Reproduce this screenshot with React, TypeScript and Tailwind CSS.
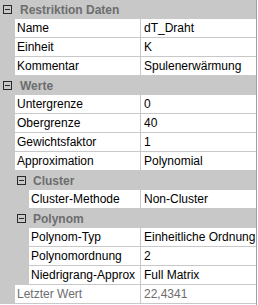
import React from "react";

type Prop = { label: string; value: string; depth: number; readOnly?: boolean };
type Item = { kind: "cat"; label: string; depth: number } | ({ kind: "prop" } & Prop);

const ITEMS: Item[] = [
  { kind: "cat", label: "Restriktion Daten", depth: 0 },
  { kind: "prop", label: "Name", value: "dT_Draht", depth: 1 },
  { kind: "prop", label: "Einheit", value: "K", depth: 1 },
  { kind: "prop", label: "Kommentar", value: "Spulenerwärmung", depth: 1 },
  { kind: "cat", label: "Werte", depth: 0 },
  { kind: "prop", label: "Untergrenze", value: "0", depth: 1 },
  { kind: "prop", label: "Obergrenze", value: "40", depth: 1 },
  { kind: "prop", label: "Gewichtsfaktor", value: "1", depth: 1 },
  { kind: "prop", label: "Approximation", value: "Polynomial", depth: 1 },
  { kind: "cat", label: "Cluster", depth: 1 },
  { kind: "prop", label: "Cluster-Methode", value: "Non-Cluster", depth: 2 },
  { kind: "cat", label: "Polynom", depth: 1 },
  { kind: "prop", label: "Polynom-Typ", value: "Einheitliche Ordnung", depth: 2 },
  { kind: "prop", label: "Polynomordnung", value: "2", depth: 2 },
  { kind: "prop", label: "Niedrigrang-Approx", value: "Full Matrix", depth: 2 },
  { kind: "prop", label: "Letzter Wert", value: "22,4341", depth: 1, readOnly: true },
];

function MinusBox() {
  return (
    <span className="relative w-[9px] h-[9px] border border-[#2a2a2a] shrink-0">
      <span className="absolute left-[1px] top-[3px] w-[5px] h-[1px] bg-[#2a2a2a]" />
    </span>
  );
}

function CategoryRow({ label, depth }: { label: string; depth: number }) {
  return (
    <div className="flex items-center h-[19px] bg-[#c8c8c8]">
      <div className={depth === 0 ? "flex items-center pl-[3px] gap-[8px]" : "flex items-center pl-[17px] gap-[7px]"}>
        <MinusBox />
        <span className="font-bold text-[#6d6d6d] leading-[18px] whitespace-nowrap">{label}</span>
      </div>
    </div>
  );
}

function PropRow({ label, value, depth, readOnly }: Prop) {
  const text = readOnly ? "text-[#6d6d6d]" : "text-black";
  return (
    <div className="flex h-[19px] border-b border-[#c8c8c8]">
      <div className={depth === 2 ? "w-[29px] shrink-0 bg-[#c8c8c8]" : "w-[15px] shrink-0 bg-[#c8c8c8]"} />
      <div className={`flex-1 min-w-0 pl-[2px] leading-[18px] bg-white whitespace-nowrap overflow-hidden ${text}`}>
        {label}
      </div>
      <div className="w-[1px] shrink-0 bg-[#c8c8c8]" />
      <div className={`w-[115px] shrink-0 pl-[3px] leading-[18px] bg-white whitespace-nowrap overflow-hidden ${text}`}>
        {value}
      </div>
    </div>
  );
}

export default function App() {
  return (
    <div
      className="w-[257px] h-[305px] bg-white border-r border-[#a0a0a0] overflow-hidden text-[12px]"
      style={{ fontFamily: '"Liberation Sans", Arial, sans-serif' }}
    >
      {ITEMS.map((it, i) =>
        it.kind === "cat" ? (
          <CategoryRow key={i} label={it.label} depth={it.depth} />
        ) : (
          <PropRow key={i} label={it.label} value={it.value} depth={it.depth} readOnly={it.readOnly} />
        )
      )}
    </div>
  );
}
